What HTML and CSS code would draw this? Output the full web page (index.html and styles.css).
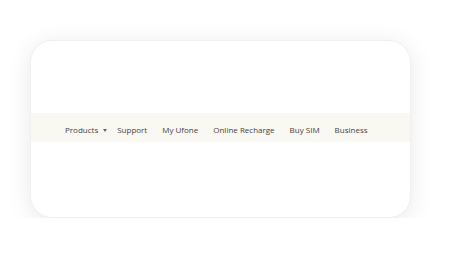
FILE: index.html
```html
<!DOCTYPE html>
<html lang="en">
<head>
    <meta charset="UTF-8">
    <meta name="viewport" content="width=device-width, initial-scale=1.0">
    <title>Ufone Menu</title>
    <link rel="stylesheet" href="styles.css">
</head>
<body>
    <div class="card">
        <!-- main menu bar -->
        <nav class="menu-bar">
            <a class="menu-item" href="#">Products<span class="caret"></span></a>
            <a class="menu-item" href="#">Support</a>
            <a class="menu-item" href="#">My Ufone</a>
            <a class="menu-item" href="#">Online Recharge</a>
            <a class="menu-item" href="#">Buy SIM</a>
            <a class="menu-item" href="#">Business</a>
        </nav>
    </div>
</body>
</html>
```

FILE: styles.css
```css
body {
    margin: 0;
    background-color: #fff;
    font-family: "Open Sans", "Liberation Sans", sans-serif;
}

.card {
    margin: 40px 0 0 30px;
    width: 381px;
    height: 178px;
    background-color: #fff;
    border-radius: 22px;
    border: 1px solid #f0f0f0;
    box-sizing: border-box;
    box-shadow: 0 4px 24px rgba(0, 0, 0, 0.09);
    padding-top: 72px;
    overflow: hidden;
}

.menu-bar {
    display: flex;
    align-items: center;
    gap: 15px;
    height: 29px;
    box-sizing: border-box;
    padding: 3px 0 0 34px;
    background-color: #faf8f3;
}

.menu-item {
    color: #444;
    text-decoration: none;
    font-size: 8px;
    white-space: nowrap;
}

.caret {
    display: inline-block;
    vertical-align: middle;
    width: 0;
    height: 0;
    border-left: 2.5px solid transparent;
    border-right: 2.5px solid transparent;
    border-top: 3px solid #666;
    margin: 0 -5px 0 5px;
}
```
